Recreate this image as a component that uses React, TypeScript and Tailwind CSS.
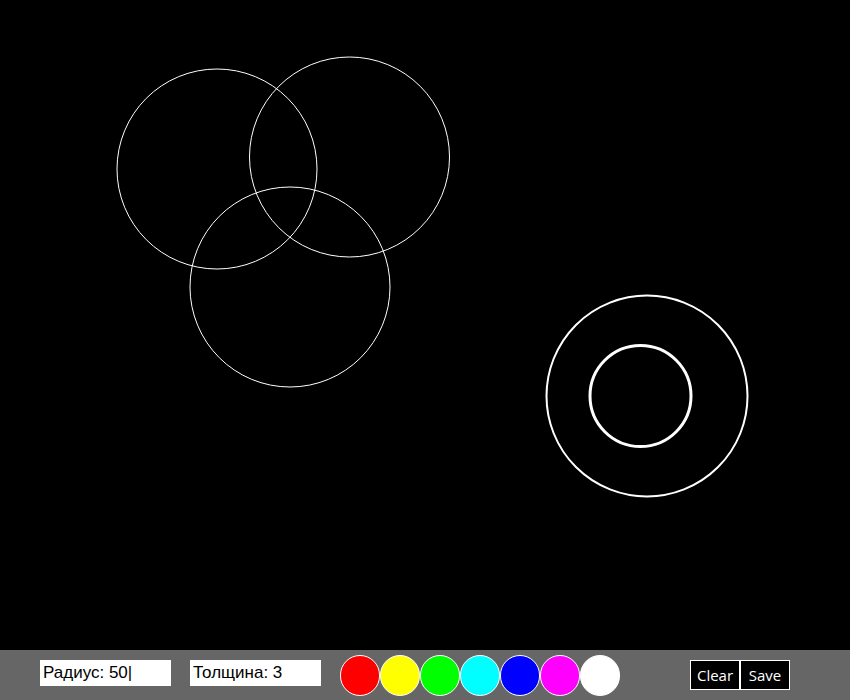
const colors = ["#ff0000", "#ffff00", "#00ff00", "#00ffff", "#0000ff", "#ff00ff", "#ffffff"];

export default function App() {
  return (
    <div className="w-[850px] h-[700px] flex flex-col bg-black overflow-hidden">
      <div className="h-[650px]">
        <svg width="850" height="650" fill="none" stroke="#fff">
          <circle cx="217" cy="169" r="100" strokeWidth="1" />
          <circle cx="349.5" cy="157" r="100" strokeWidth="1" />
          <circle cx="290" cy="287" r="100" strokeWidth="1" />
          <circle cx="647" cy="396" r="100.5" strokeWidth="2" />
          <circle cx="640.5" cy="396" r="50.5" strokeWidth="3" />
        </svg>
      </div>
      <div className="h-[50px] bg-[#666666] flex items-start pl-[40px] font-['Liberation_Sans',Arial,sans-serif]">
        <div className="mt-[10px] w-[131px] h-[26px] bg-white text-black text-[17px] leading-[26px] pl-[3px]">
          Радиус: 50|
        </div>
        <div className="mt-[10px] ml-[19px] w-[131px] h-[26px] bg-white text-black text-[17px] leading-[26px] pl-[3px]">
          Толщина: 3
        </div>
        <div className="mt-[5px] ml-[19px] flex">
          {colors.map((c) => (
            <div
              key={c}
              className="w-[40px] h-[41px] rounded-full border border-white"
              style={{ backgroundColor: c }}
            />
          ))}
        </div>
        <div className="mt-[10px] ml-[70px] flex font-['Open_Sans',sans-serif] text-white text-[15px]">
          <button className="w-[50px] h-[30px] bg-black border border-white leading-[27px] pt-[1px]">Clear</button>
          <button className="w-[50px] h-[30px] bg-black border border-white leading-[27px]">Save</button>
        </div>
      </div>
    </div>
  );
}
